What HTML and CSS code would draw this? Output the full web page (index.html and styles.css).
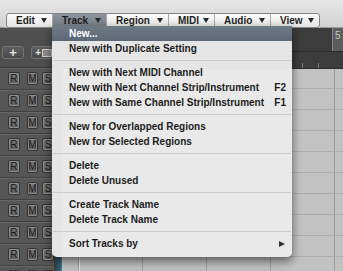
FILE: index.html
```html
<!DOCTYPE html>
<html lang="en">
  <head>
    <meta charset="UTF-8" />
    <meta name="viewport" content="width=device-width, initial-scale=1.0" />
    <title>Track menu</title>
    <link rel="stylesheet" href="styles.css">
  </head>
  <body>
    <div class="app">
      <!-- Local menu bar -->
      <div class="toolbar">
        <div class="menubar">
          <div class="mb-item">Edit <span class="tri"></span></div>
          <div class="mb-item active">Track <span class="tri"></span></div>
          <div class="mb-item">Region <span class="tri"></span></div>
          <div class="mb-item">MIDI <span class="tri"></span></div>
          <div class="mb-item">Audio <span class="tri"></span></div>
          <div class="mb-item">View <span class="tri"></span></div>
        </div>
      </div>

      <div class="workspace">
        <!-- Track list -->
        <div class="tracks">
          <div class="tracks-head">
            <span class="add-btn">+</span>
            <span class="add-btn folder">+<span class="folder-icon"></span></span>
          </div>
          <div class="track"><span class="rms">R</span><span class="rms">M</span><span class="rms">S</span></div>
          <div class="track"><span class="rms">R</span><span class="rms">M</span><span class="rms">S</span></div>
          <div class="track"><span class="rms">R</span><span class="rms">M</span><span class="rms">S</span></div>
          <div class="track"><span class="rms">R</span><span class="rms">M</span><span class="rms">S</span></div>
          <div class="track"><span class="rms">R</span><span class="rms">M</span><span class="rms">S</span></div>
          <div class="track"><span class="rms">R</span><span class="rms">M</span><span class="rms">S</span></div>
          <div class="track"><span class="rms">R</span><span class="rms">M</span><span class="rms">S</span></div>
          <div class="track"><span class="rms">R</span><span class="rms">M</span><span class="rms">S</span></div>
          <div class="track"><span class="rms">R</span><span class="rms">M</span><span class="rms">S</span></div>
          <div class="track"><span class="rms"></span><span class="rms"></span><span class="rms"></span></div>
        </div>

        <div class="divider"></div>

        <!-- Arrange area -->
        <div class="arrange">
          <div class="ruler">
            <div class="ruler-top"><span class="bar-num">5</span></div>
            <div class="ruler-bottom"><span class="tick t1"></span><span class="tick t2"></span></div>
          </div>
          <div class="grid">
            <div class="grid-row"></div>
            <div class="grid-row"></div>
            <div class="grid-row"></div>
            <div class="grid-row"></div>
            <div class="grid-row"></div>
            <div class="grid-row"></div>
            <div class="grid-row"></div>
            <div class="grid-row"></div>
            <div class="grid-row"></div>
            <div class="grid-row"></div>
          </div>
        </div>
      </div>

      <!-- Open Track menu -->
      <div class="menu">
        <div class="menu-item selected">New...</div>
        <div class="menu-item">New with Duplicate Setting</div>
        <div class="menu-sep"></div>
        <div class="menu-item">New with Next MIDI Channel</div>
        <div class="menu-item">New with Next Channel Strip/Instrument <span class="key">F2</span></div>
        <div class="menu-item">New with Same Channel Strip/Instrument <span class="key">F1</span></div>
        <div class="menu-sep"></div>
        <div class="menu-item">New for Overlapped Regions</div>
        <div class="menu-item">New for Selected Regions</div>
        <div class="menu-sep"></div>
        <div class="menu-item">Delete</div>
        <div class="menu-item">Delete Unused</div>
        <div class="menu-sep"></div>
        <div class="menu-item">Create Track Name</div>
        <div class="menu-item">Delete Track Name</div>
        <div class="menu-sep"></div>
        <div class="menu-item">Sort Tracks by <span class="submenu"></span></div>
      </div>
    </div>
  </body>
</html>
```

FILE: styles.css
```css
body {
  margin: 0;
  font-family: "Liberation Sans", Arial, sans-serif;
  overflow: hidden;
}

.app {
  position: relative;
  width: 343px;
  height: 271px;
  overflow: hidden;
  background-color: #505050;
}

/* Menu bar */

.toolbar {
  height: 28px;
  box-sizing: border-box;
  padding: 10px 0 0 6px;
  background: linear-gradient(#e6e6e6, #d2d2d2);
  border-bottom: 1px solid #9a9a9a;
}

.menubar {
  display: inline-flex;
  height: 15px;
  box-sizing: border-box;
  border: 1px solid #858585;
  border-radius: 3px;
  background: linear-gradient(#fcfcfc, #e4e4e4);
  box-shadow: 0 1px 0 rgba(255, 255, 255, 0.7);
}

.mb-item {
  display: flex;
  flex-shrink: 0;
  align-items: center;
  justify-content: space-between;
  box-sizing: border-box;
  padding: 0 5px 0 9px;
  font-size: 10px;
  font-weight: bold;
  color: #1e1e1e;
  border-right: 1px solid #a8a8a8;
}

.mb-item:nth-child(1) { width: 46px; }
.mb-item:nth-child(2) { width: 54px; }
.mb-item:nth-child(3) { width: 62px; }
.mb-item:nth-child(4) { width: 46px; }
.mb-item:nth-child(5) { width: 56px; }
.mb-item:nth-child(6) { width: 48px; border-right: none; }

.mb-item.active {
  background: linear-gradient(#8d949c, #767d86);
}

.tri {
  width: 0;
  height: 0;
  border-left: 3px solid transparent;
  border-right: 3px solid transparent;
  border-top: 5px solid #2a2a2a;
}

/* Workspace */

.workspace {
  display: flex;
  height: 243px;
}

.tracks {
  width: 54px;
  flex-shrink: 0;
  background-color: #565656;
}

.tracks-head {
  display: flex;
  gap: 7px;
  height: 40px;
  box-sizing: border-box;
  padding: 18px 0 0 2px;
  background-color: #4f4f4f;
  border-bottom: 1px solid #3a3a3a;
}

.add-btn {
  display: flex;
  align-items: center;
  justify-content: center;
  width: 25px;
  height: 13px;
  box-sizing: border-box;
  border: 1px solid #747474;
  border-radius: 3px;
  background: linear-gradient(#5e5e5e, #4a4a4a);
  color: #e4e4e4;
  font-size: 13px;
  font-weight: bold;
  line-height: 1;
}

.add-btn.folder {
  justify-content: flex-start;
  padding-left: 3px;
  font-size: 10px;
}

.folder-icon {
  width: 8px;
  height: 6px;
  margin-left: 1px;
  border: 1px solid #cfcfcf;
  background-color: #8a8a8a;
}

.track {
  display: flex;
  align-items: center;
  height: 22px;
  box-sizing: border-box;
  padding-left: 8px;
  gap: 7px;
  border-bottom: 1px solid #404040;
  box-shadow: inset 0 1px 0 #666;
}

.rms {
  display: flex;
  align-items: center;
  justify-content: center;
  width: 13px;
  height: 13px;
  box-sizing: border-box;
  border: 1px solid #353535;
  border-radius: 2px;
  background: linear-gradient(#7a7a7a, #5e5e5e);
  box-shadow: inset 0 0 0 1px #8a8a8a;
  font-size: 10px;
  color: #1a1a1a;
}

.rms + .rms + .rms {
  margin-left: -3px;
}

.divider {
  width: 8px;
  flex-shrink: 0;
  background: linear-gradient(90deg, #3d3d3d, #2f5b6c 70%, #3f7f94);
}

.arrange {
  flex: 1;
  display: flex;
  flex-direction: column;
}

.ruler {
  height: 40px;
  background-color: #3c3c3c;
}

.ruler-top {
  display: flex;
  justify-content: flex-end;
  height: 23px;
  border-bottom: 1px solid #2a2a2a;
}

.bar-num {
  width: 8px;
  padding-left: 2px;
  background-color: #5c5c5c;
  border-left: 1px solid #888;
  color: #c8c8c8;
  font-size: 10px;
  line-height: 16px;
}

.ruler-bottom {
  position: relative;
  height: 16px;
  border-bottom: 1px solid #2c2c2c;
}

.tick {
  position: absolute;
  bottom: 0;
  width: 1px;
  height: 5px;
  background-color: #777;
}

.t1 { left: 240px; }
.t2 { left: 256px; }

.grid {
  flex: 1;
  background-color: #c2c2c2;
  background-image:
    linear-gradient(90deg, transparent 17px, #e8e8e8 17px, #e8e8e8 18px, transparent 18px),
    repeating-linear-gradient(90deg, transparent 0 16px, #9c9c9c 16px 17px, transparent 17px 80px);
  background-size: 100% 100%, 64px 100%;
  background-position: 0 0, 64px 0;
}

.grid-row {
  height: 21px;
  box-sizing: border-box;
  border-bottom: 1px solid #adadad;
}

/* Dropdown menu */

.menu {
  position: absolute;
  left: 52px;
  top: 26px;
  width: 240px;
  padding-bottom: 6px;
  background-color: rgba(234, 234, 234, 0.97);
  border-radius: 0 0 5px 5px;
  box-shadow: 0 4px 10px rgba(0, 0, 0, 0.55);
}

.menu-item {
  display: flex;
  justify-content: space-between;
  align-items: center;
  height: 15px;
  padding: 0 6px 0 17px;
  font-size: 10px;
  font-weight: bold;
  white-space: nowrap;
  color: #1c1c1c;
}

.menu-item.selected {
  background: linear-gradient(#6f7a87, #5d6877);
  color: #fff;
}

.submenu {
  width: 0;
  height: 0;
  margin-right: 1px;
  border-top: 3.5px solid transparent;
  border-bottom: 3.5px solid transparent;
  border-left: 6px solid #333;
}

.menu-sep {
  height: 9px;
  background: linear-gradient(transparent 4px, #cbcbcb 4px, #cbcbcb 5px, transparent 5px);
  margin: 0 1px;
}
```
